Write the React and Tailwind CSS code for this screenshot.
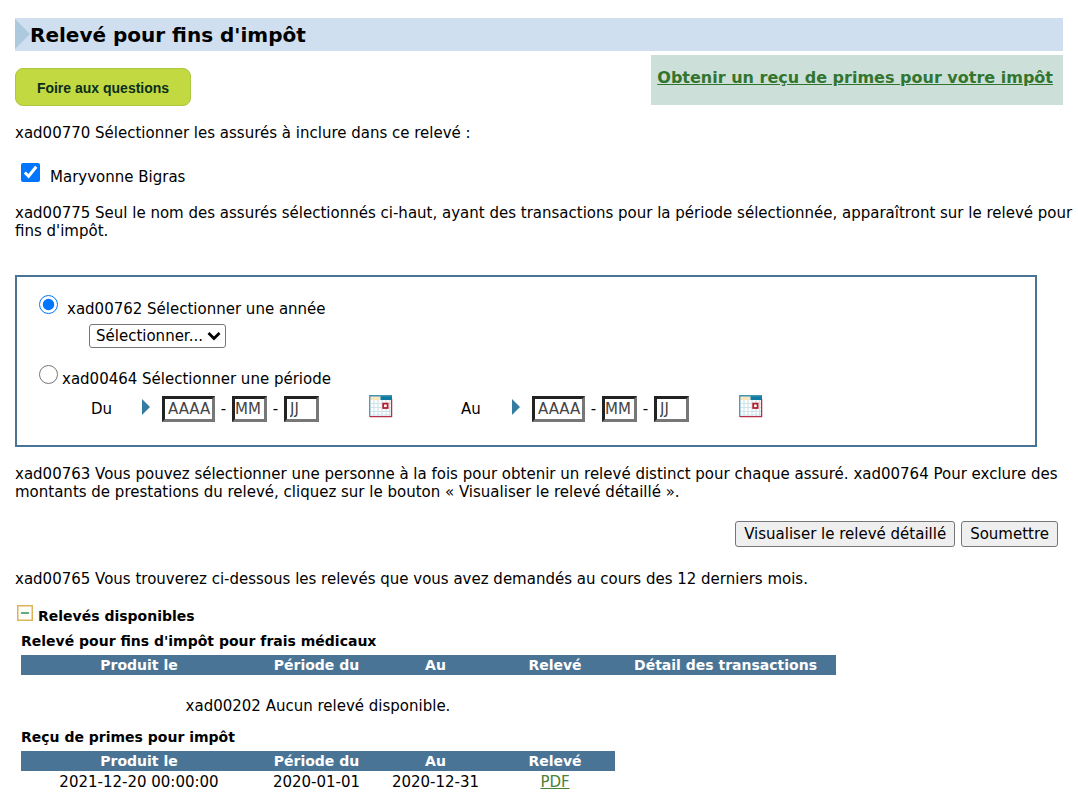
import React, { useState } from "react";

const medicalColumns = ["Produit le", "Période du", "Au", "Relevé", "Détail des transactions"];
const premiumColumns = ["Produit le", "Période du", "Au", "Relevé"];

const receipts = [
  { produced: "2021-12-20 00:00:00", from: "2020-01-01", to: "2020-12-31" },
];

function CalendarIcon() {
  return (
    <svg width="24" height="23" viewBox="0 0 24 23" aria-hidden="true">
      <rect x="0" y="0" width="23" height="22" fill="#fff" />
      <path d="M2 8.5h20M2 12.5h20M2 16.5h20M2 20h20M5 4v17M9 4v17M13 4v17M17 4v17M20.5 4v17" stroke="#cfe3ec" strokeWidth="1.2" />
      <rect x="1" y="1" width="10.5" height="4" fill="#fbe6bd" />
      <rect x="11.5" y="0.5" width="11.5" height="4.5" fill="#0f7ba3" />
      <path d="M0.75 22V0.75H23" fill="none" stroke="#3f93b4" strokeWidth="1.3" />
      <path d="M22.6 4v17.6H1" fill="none" stroke="#b5304a" strokeWidth="1.3" />
      <rect x="14.2" y="8.6" width="4.4" height="4.4" fill="#fff" stroke="#b3202c" strokeWidth="1.8" />
    </svg>
  );
}

function DateGroup({ label, prefix }) {
  const field =
    "h-[26px] border-[3px] border-t-[#222] border-l-[#222] border-r-[#777] border-b-[#777] bg-white outline-none placeholder:text-[#444]";

  return (
    <div role="group" aria-label={label} className="flex w-[370px] items-center">
      <span className="w-[51px]">{label}</span>
      <svg width="8" height="16" viewBox="0 0 8 16" className="mr-3 mb-1 shrink-0" aria-hidden="true">
        <path d="M0 0L8 8L0 16Z" fill="#357ca3" />
      </svg>
      <input aria-label={`${label} année`} name={`${prefix}Year`} placeholder="AAAA" maxLength={4} className={`${field} w-[53px] pl-[3px]`} />
      <span className="w-[17px] text-center">-</span>
      <input aria-label={`${label} mois`} name={`${prefix}Month`} placeholder="MM" maxLength={2} className={`${field} w-[35px]`} />
      <span className="w-[17px] text-center">-</span>
      <input aria-label={`${label} jour`} name={`${prefix}Day`} placeholder="JJ" maxLength={2} className={`${field} w-[35px] pl-[3px]`} />
      <button type="button" aria-label={`Calendrier ${label}`} className="mb-1 ml-[50px]">
        <CalendarIcon />
      </button>
    </div>
  );
}

function TableHead({ columns }) {
  return (
    <thead>
      <tr className="h-5 bg-[#4a7495] text-[14px] text-white">
        {columns.map((column) => (
          <th key={column} scope="col" className="font-bold">
            {column}
          </th>
        ))}
      </tr>
    </thead>
  );
}

export default function App() {
  const [included, setIncluded] = useState(true);
  const [mode, setMode] = useState("year");
  const [open, setOpen] = useState(true);

  return (
    <main className="bg-white px-[15px] pt-[18px] pb-4 font-['Verdana','DejaVu_Sans',sans-serif] text-[15px] leading-[18px] text-black">
      <header className="flex h-[33px] items-center bg-[#cfdfef]">
        <svg width="15" height="33" viewBox="0 0 15 33" aria-hidden="true">
          <path d="M0 1L15 16L0 31Z" fill="#adc9de" />
        </svg>
        <h1 className="text-[20px] font-bold">Relevé pour fins d'impôt</h1>
      </header>

      <div className="flex items-start justify-between">
        <button
          type="button"
          className="mt-[17px] h-[38px] w-44 rounded-lg border border-[#a9c83f] bg-[#c2d942] pt-[2px] font-['Liberation_Sans',sans-serif] text-[14px] font-bold text-[#0b2e1c]"
        >
          Foire aux questions
        </button>
        <div className="mt-1 h-[50px] bg-[#cce0d9] pt-[14px] pr-[10px] pl-[6px]">
          <a href="#recu" className="text-[16px] font-bold text-[#33752f] underline">
            Obtenir un reçu de primes pour votre impôt
          </a>
        </div>
      </div>

      <p className="mt-[18px]">xad00770 Sélectionner les assurés à inclure dans ce relevé :</p>

      <label className="mt-[21px] ml-[6px] flex items-start gap-[10px]">
        <input
          type="checkbox"
          checked={included}
          onChange={(e) => setIncluded(e.target.checked)}
          className="size-[19px] accent-[#0075ff]"
        />
        <span className="mt-[5px]">Maryvonne Bigras</span>
      </label>

      <p className="mt-[18px] -mr-[10px]">
        xad00775 Seul le nom des assurés sélectionnés ci-haut, ayant des transactions pour la période
        sélectionnée, apparaîtront sur le relevé pour fins d'impôt.
      </p>

      <section className="mt-[35px] mr-[26px] border-2 border-[#4a7495] px-[22px] pt-[18px] pb-[23px]">
        <label className="flex items-start gap-[9px]">
          <input
            type="radio"
            name="mode"
            checked={mode === "year"}
            onChange={() => setMode("year")}
            className="size-[19px] accent-[#0075ff]"
          />
          <span className="mt-[5px]">xad00762 Sélectionner une année</span>
        </label>

        <div className="relative mt-[6px] ml-[50px] w-[137px]">
          <select
            aria-label="Année"
            className="block h-6 w-full appearance-none rounded-[3px] border border-[#767676] bg-white pl-[6px]"
          >
            <option>Sélectionner...</option>
          </select>
          <svg width="14" height="10" viewBox="0 0 14 10" className="pointer-events-none absolute top-[7px] right-[5px]" aria-hidden="true">
            <path d="M1.5 2L7 7.5L12.5 2" fill="none" stroke="#000" strokeWidth="2.8" />
          </svg>
        </div>

        <label className="mt-[17px] flex items-start gap-1">
          <input
            type="radio"
            name="mode"
            checked={mode === "period"}
            onChange={() => setMode("period")}
            className="size-[19px] accent-[#0075ff]"
          />
          <span className="mt-[5px]">xad00464 Sélectionner une période</span>
        </label>

        <div className="mt-[7px] ml-[52px] flex">
          <DateGroup label="Du" prefix="from" />
          <DateGroup label="Au" prefix="to" />
        </div>
      </section>

      <p className="mt-[18px]">
        xad00763 Vous pouvez sélectionner une personne à la fois pour obtenir un relevé distinct pour
        chaque assuré. xad00764 Pour exclure des montants de prestations du relevé, cliquez sur le bouton
        « Visualiser le relevé détaillé ».
      </p>

      <div className="mt-5 mr-[5px] flex justify-end gap-[6px]">
        <button type="button" className="h-[26px] rounded-[3px] border border-[#767676] bg-[#efefef] px-2">
          Visualiser le relevé détaillé
        </button>
        <button type="submit" className="h-[26px] rounded-[3px] border border-[#767676] bg-[#efefef] px-2">
          Soumettre
        </button>
      </div>

      <p className="mt-[23px]">
        xad00765 Vous trouverez ci-dessous les relevés que vous avez demandés au cours des 12 derniers mois.
      </p>

      <div className="mt-[17px] ml-[2px] flex items-start gap-[5px]">
        <button type="button" aria-label="Relevés disponibles" aria-expanded={open} onClick={() => setOpen(!open)}>
          <svg width="16" height="16" viewBox="0 0 16 16" aria-hidden="true">
            <rect x="0.75" y="0.75" width="14.5" height="14.5" fill="#fffdf8" stroke="#dcb45c" strokeWidth="1.5" />
            <path d={open ? "M4 8H12" : "M4 8H12M8 4V12"} stroke="#3c9460" strokeWidth="1.6" />
          </svg>
        </button>
        <h2 className="mt-[2px] text-[14px] font-bold">Relevés disponibles</h2>
      </div>

      {open && (
        <div className="ml-[6px]">
          <h3 className="mt-[7px] text-[14px] font-bold">Relevé pour fins d'impôt pour frais médicaux</h3>
          <table className="mt-[5px] w-[815px] table-fixed">
            <colgroup>
              <col className="w-[236px]" />
              <col className="w-[119px]" />
              <col className="w-[119px]" />
              <col className="w-[120px]" />
              <col />
            </colgroup>
            <TableHead columns={medicalColumns} />
            <tbody>
              <tr>
                <td colSpan={4} className="pt-[22px] text-center">
                  xad00202 Aucun relevé disponible.
                </td>
              </tr>
            </tbody>
          </table>

          <h3 className="mt-[13px] text-[14px] font-bold">Reçu de primes pour impôt</h3>
          <table className="mt-[5px] w-[594px] table-fixed">
            <colgroup>
              <col className="w-[236px]" />
              <col className="w-[119px]" />
              <col className="w-[119px]" />
              <col />
            </colgroup>
            <TableHead columns={premiumColumns} />
            <tbody>
              {receipts.map((receipt) => (
                <tr key={receipt.produced} className="text-center">
                  <td className="pt-[2px]">{receipt.produced}</td>
                  <td className="pt-[2px]">{receipt.from}</td>
                  <td className="pt-[2px]">{receipt.to}</td>
                  <td className="pt-[2px]">
                    <a href="#pdf" className="text-[#4a8237] underline">
                      PDF
                    </a>
                  </td>
                </tr>
              ))}
            </tbody>
          </table>
        </div>
      )}
    </main>
  );
}
